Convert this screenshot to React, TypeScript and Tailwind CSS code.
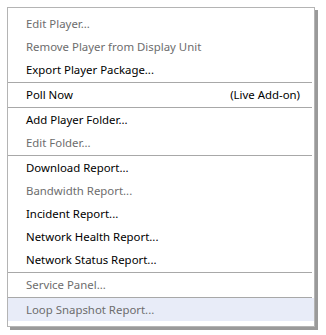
type Item = { label: string; disabled?: boolean; hint?: string; active?: boolean } | 'sep'

const items: Item[] = [
  { label: 'Edit Player...', disabled: true },
  { label: 'Remove Player from Display Unit', disabled: true },
  { label: 'Export Player Package...' },
  'sep',
  { label: 'Poll Now', hint: '(Live Add-on)' },
  'sep',
  { label: 'Add Player Folder...' },
  { label: 'Edit Folder...', disabled: true },
  'sep',
  { label: 'Download Report...' },
  { label: 'Bandwidth Report...', disabled: true },
  { label: 'Incident Report...' },
  { label: 'Network Health Report...' },
  { label: 'Network Status Report...' },
  'sep',
  { label: 'Service Panel...', disabled: true },
  'sep',
  { label: 'Loop Snapshot Report...', disabled: true, active: true },
]

export default function App() {
  return (
    <div className="h-[335px] w-[326px] bg-white pl-[7px] pt-[7px] font-['Segoe_UI','Noto_Sans',sans-serif] text-[11.4px]">
      <div className="w-[308px] border border-[#b4b4b4] bg-white pb-[5px] pt-[4px] shadow-[3px_3px_0_0_#9a9a9a]">
        {items.map((item, i) =>
          item === 'sep' ? (
            <div key={i} className="mr-[2px] mt-px h-px bg-[#a8a8a8]" />
          ) : (
            <div
              key={i}
              className={
                'flex h-[23px] items-center justify-between pl-[18px] pr-[14px] ' +
                (item.disabled ? 'text-[#6d6d6d] ' : 'text-black ') +
                (item.active ? 'bg-[#e8ecf8]' : '')
              }
            >
              <span>{item.label}</span>
              {item.hint ? <span>{item.hint}</span> : null}
            </div>
          ),
        )}
      </div>
    </div>
  )
}
